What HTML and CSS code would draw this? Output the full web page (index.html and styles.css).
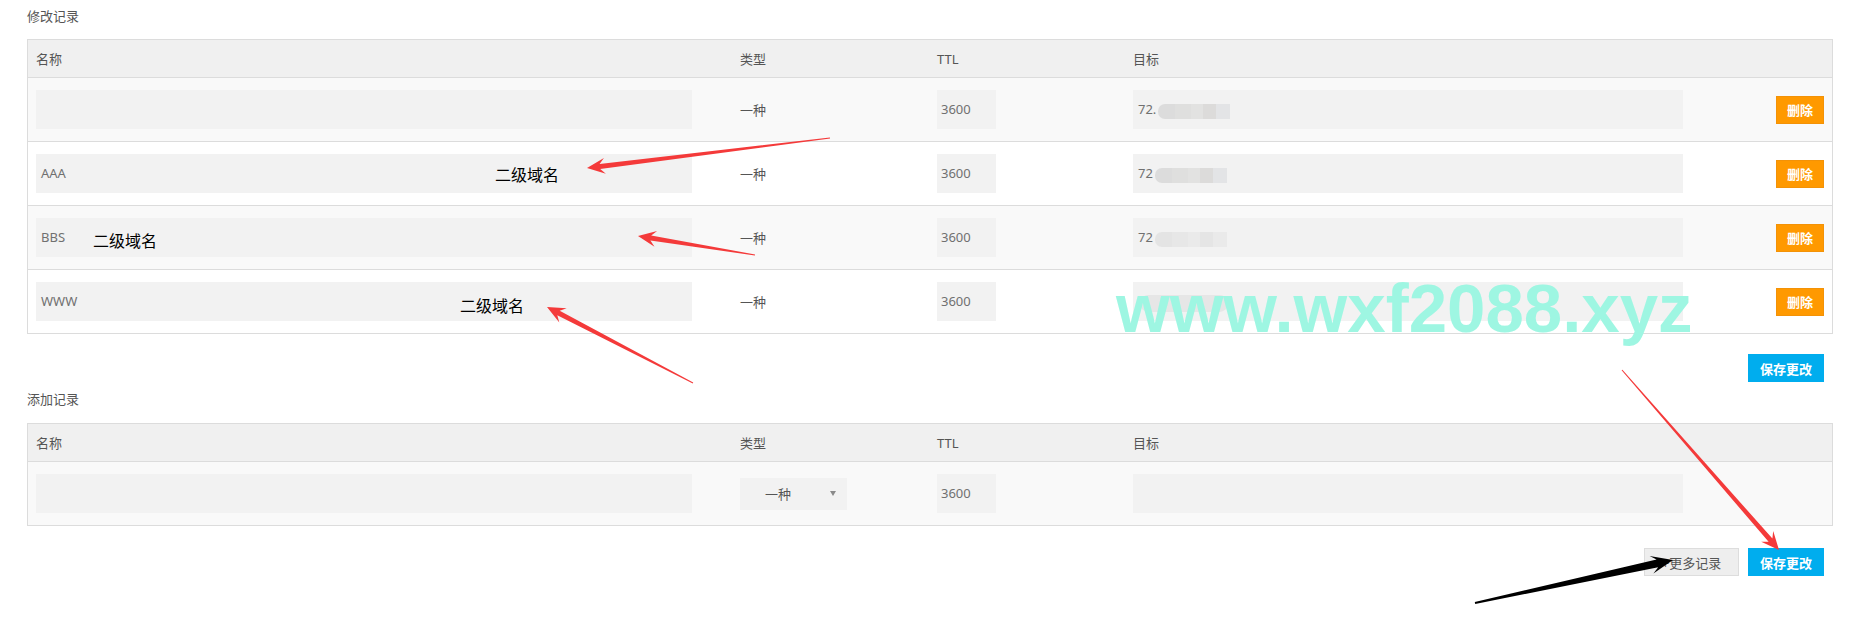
FILE: index.html
```html
<!DOCTYPE html>
<html lang="zh-CN">
<head>
    <meta charset="UTF-8">
    <meta name="viewport" content="width=device-width, initial-scale=1.0">
    <title>域名解析记录</title>
    <link rel="stylesheet" href="styles.css">
</head>
<body>
    <div class="page">
        <h3 class="section-title">修改记录</h3>
        <div class="records">
            <div class="row head">
                <div class="cell">名称</div>
                <div class="cell">类型</div>
                <div class="cell">TTL</div>
                <div class="cell">目标</div>
                <div class="cell"></div>
            </div>
            <div class="row odd">
                <div class="cell"><div class="field name"></div></div>
                <div class="cell type">一种</div>
                <div class="cell"><div class="field ttl">3600</div></div>
                <div class="cell"><div class="field target">72.<span class="mosaic"></span></div></div>
                <div class="cell action"><button class="btn btn-delete">删除</button></div>
            </div>
            <div class="row">
                <div class="cell"><div class="field name">AAA</div></div>
                <div class="cell type">一种</div>
                <div class="cell"><div class="field ttl">3600</div></div>
                <div class="cell"><div class="field target">72<span class="mosaic"></span></div></div>
                <div class="cell action"><button class="btn btn-delete">删除</button></div>
            </div>
            <div class="row odd">
                <div class="cell"><div class="field name">BBS</div></div>
                <div class="cell type">一种</div>
                <div class="cell"><div class="field ttl">3600</div></div>
                <div class="cell"><div class="field target">72<span class="mosaic light"></span></div></div>
                <div class="cell action"><button class="btn btn-delete">删除</button></div>
            </div>
            <div class="row">
                <div class="cell"><div class="field name">WWW</div></div>
                <div class="cell type">一种</div>
                <div class="cell"><div class="field ttl">3600</div></div>
                <div class="cell"><div class="field target"><span class="mosaic faint"></span></div></div>
                <div class="cell action"><button class="btn btn-delete">删除</button></div>
            </div>
        </div>
        <div class="actions">
            <button class="btn btn-save">保存更改</button>
        </div>

        <h3 class="section-title second">添加记录</h3>
        <div class="records">
            <div class="row head">
                <div class="cell">名称</div>
                <div class="cell">类型</div>
                <div class="cell">TTL</div>
                <div class="cell">目标</div>
                <div class="cell"></div>
            </div>
            <div class="row odd">
                <div class="cell"><div class="field name"></div></div>
                <div class="cell">
                    <div class="select"><span>一种</span><span class="caret"></span></div>
                </div>
                <div class="cell"><div class="field ttl">3600</div></div>
                <div class="cell"><div class="field target"></div></div>
                <div class="cell"></div>
            </div>
        </div>
        <div class="actions bottom">
            <button class="btn btn-more">+更多记录</button>
            <button class="btn btn-save">保存更改</button>
        </div>
    </div>

    <!-- annotations drawn over the screenshot -->
    <div class="notes">
        <div class="note note-1">二级域名</div>
        <div class="note note-2">二级域名</div>
        <div class="note note-3">二级域名</div>
        <div class="watermark">www.wxf2088.xyz</div>
        <svg class="arrows" width="1871" height="620" viewBox="0 0 1871 620">
            <g fill="#f43a3a">
                <polygon points="829.9,137.5 599.6,163.9 603.9,157.9 587,168 605.9,173.7 600.2,168.9 830.1,138.5"/>
                <polygon points="755.1,254.5 651.2,235.6 657.1,231 638,236 654.5,246.8 650.4,240.6 754.9,255.5"/>
                <polygon points="693.2,382.6 559.7,310.8 566.7,308.2 547,307 559.3,322.4 557.3,315.2 692.8,383.4"/>
                <polygon points="1621.6,370.3 1768.6,541.8 1761.2,541.7 1779,550 1773.2,531.1 1772.4,538.6 1622.4,369.7"/>
            </g>
            <polygon fill="#000" points="1475.2,604 1658.2,567.3 1653.4,573.5 1673,560 1649.6,555.9 1656.6,559.5 1474.8,602"/>
        </svg>
    </div>
</body>
</html>
```

FILE: styles.css
```css
body {
    margin: 0;
    position: relative;
    min-height: 620px;
    overflow: hidden;
    background: #fff;
    font-family: "Noto Sans", "Noto Sans CJK SC", sans-serif;
    font-size: 13px;
    color: #555;
}

.page {
    padding: 0 38px 0 27px;
}

.section-title {
    margin: 6px 0 13px;
    font-size: 13px;
    font-weight: normal;
    line-height: 20px;
    color: #555;
}

.section-title.second {
    margin-top: 7px;
    margin-bottom: 14px;
}

.records {
    border: 1px solid #dcdcdc;
}

.row {
    display: grid;
    grid-template-columns: 704px 197px 196px 566px 141px;
    align-items: center;
    height: 63px;
    border-bottom: 1px solid #dcdcdc;
    background: #fff;
}

.row:last-child {
    border-bottom: none;
}

.row.odd {
    background: #f9f9f9;
}

.row.head {
    height: 37px;
    background: #f0f0f0;
    color: #555;
}

.cell {
    padding: 0 8px;
    display: flex;
    align-items: center;
}

.cell.type {
    color: #555;
}

.cell.action {
    justify-content: flex-end;
}

.field {
    height: 39px;
    line-height: 39px;
    padding-left: 5px;
    box-sizing: border-box;
    background: #f2f2f2;
    color: #707070;
    white-space: nowrap;
    overflow: hidden;
}

.field.name {
    width: 656px;
}

.field.ttl {
    width: 59px;
    padding-left: 4px;
}

.field.target {
    width: 550px;
    display: flex;
    align-items: center;
}

.mosaic {
    display: inline-block;
    width: 72px;
    height: 15px;
    margin-left: 2px;
    margin-top: 3px;
    border-radius: 7px 0 0 7px;
    background: linear-gradient(90deg, #dcdcdc 0 24%, #dfdfde 24% 46%, #e2e2e1 46% 62%, #dcdbda 62% 80%, #e3e4e6 80%);
    filter: blur(0.6px);
}

.mosaic.light {
    background: linear-gradient(90deg, #e4e4e4 0 24%, #e7e7e7 24% 46%, #eaeaea 46% 62%, #e5e5e5 62% 80%, #eaeaea 80%);
}

.mosaic.faint {
    width: 88px;
    margin-left: 2px;
    height: 17px;
    background: #e6e6e6;
    border-radius: 9px;
}

.select {
    width: 107px;
    height: 32px;
    background: #f2f2f2;
    display: flex;
    align-items: center;
    padding-left: 25px;
    box-sizing: border-box;
    color: #555;
}

.select .caret {
    margin-left: 39px;
    width: 0;
    height: 0;
    border-left: 3px solid transparent;
    border-right: 3px solid transparent;
    border-top: 5px solid #8a8a8a;
}

.btn {
    height: 28px;
    padding: 0;
    border: 1px solid transparent;
    font-family: inherit;
    font-size: 13px;
    font-weight: bold;
    color: #fff;
    cursor: pointer;
}

.btn-delete {
    width: 48px;
    background: #ff9900;
    border-color: #f39207;
}

.btn-save {
    width: 76px;
    background: #00adee;
    border-color: #00adee;
}

.btn-more {
    width: 95px;
    background: #eeeeee;
    border-color: #dddddd;
    color: #555;
    font-weight: normal;
}

.actions {
    display: flex;
    justify-content: flex-end;
    gap: 9px;
    margin-top: 20px;
    padding-right: 9px;
}

.actions.bottom {
    margin-top: 22px;
}

.notes {
    position: absolute;
    top: 0;
    left: 0;
    width: 1871px;
    height: 620px;
    pointer-events: none;
}

.note {
    position: absolute;
    font-family: "Noto Sans CJK SC", sans-serif;
    font-size: 16px;
    line-height: 20px;
    color: #000;
}

.note-1 {
    left: 495px;
    top: 164px;
}

.note-2 {
    left: 93px;
    top: 230px;
}

.note-3 {
    left: 460px;
    top: 295px;
}

.watermark {
    position: absolute;
    left: 1116px;
    top: 274px;
    font-family: "Liberation Sans", sans-serif;
    font-size: 69px;
    font-weight: bold;
    line-height: 69px;
    color: #9ef6e2;
    white-space: nowrap;
}

.arrows {
    position: absolute;
    top: 0;
    left: 0;
}
```
